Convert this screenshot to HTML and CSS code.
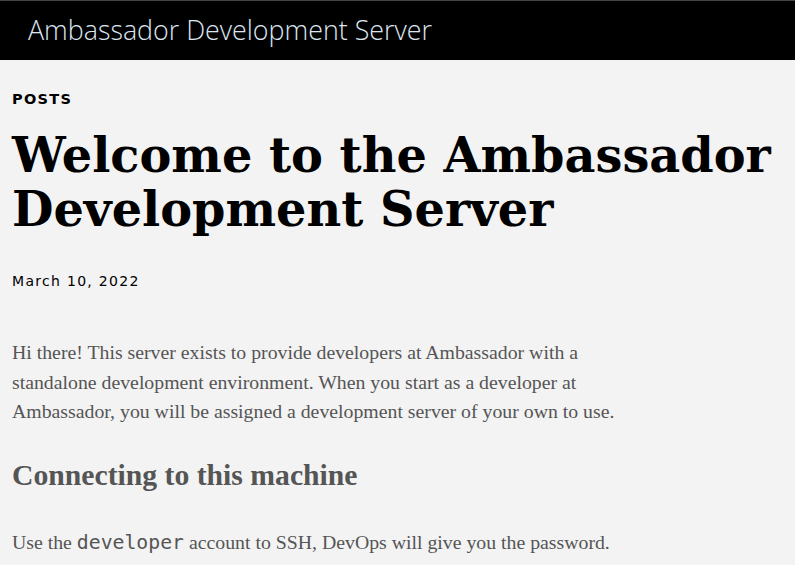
FILE: index.html
```html
<!DOCTYPE html>
<html>
<head>
<meta charset="utf-8">
<link rel="stylesheet" href="styles.css">
</head>
<body>
<header class="topbar">
  <div class="brand">Ambassador Development Server</div>
</header>
<main class="content">
  <div class="section-label">POSTS</div>
  <h1 class="post-title">Welcome to the Ambassador Development Server</h1>
  <div class="post-date">March 10, 2022</div>
  <div class="post-body">
    <p>Hi there! This server exists to provide developers at Ambassador with a standalone development environment. When you start as a developer at Ambassador, you will be assigned a development server of your own to use.</p>
    <h2>Connecting to this machine</h2>
    <p>Use the <code>developer</code> account to SSH, DevOps will give you the password.</p>
  </div>
</main>
</body>
</html>
```
FILE: styles.css
```css
html, body {
  margin: 0;
  padding: 0;
  background: #f3f3f3;
}
body {
  border-top: 1px solid #444;
}
.topbar {
  background: #000;
  height: 59px;
  display: flex;
  align-items: center;
  padding-left: 28px;
}
.brand {
  font-family: "Open Sans", sans-serif;
  font-weight: 300;
  font-size: 26.8px;
  color: #dde6f0;
  line-height: 1;
  margin-top: -1px;
}
.content {
  padding: 0 12px;
}
.section-label {
  font-family: "DejaVu Sans", sans-serif;
  font-weight: bold;
  font-size: 14.5px;
  letter-spacing: 1.3px;
  color: #000;
  margin-top: 30px;
  line-height: 18px;
}
.post-title {
  font-family: "DejaVu Serif", serif;
  font-weight: bold;
  font-size: 47.8px;
  line-height: 54px;
  margin: 20px 0 0 0;
  color: #000;
}
.post-date {
  font-family: "DejaVu Sans", sans-serif;
  font-size: 14px;
  letter-spacing: 1.3px;
  color: #000;
  margin-top: 36px;
  line-height: 18px;
}
.post-body {
  max-width: 640px;
  font-family: "Liberation Serif", serif;
  font-size: 19.8px;
  line-height: 29.5px;
  color: #555;
  margin-top: 48px;
}
.post-body p {
  margin: 0;
}
.post-body h2 {
  font-family: "Liberation Serif", serif;
  font-size: 29.7px;
  font-weight: bold;
  line-height: 36px;
  margin: 30px 0 35px 0;
  color: #555;
}
.post-body code {
  font-family: "DejaVu Sans Mono", monospace;
  font-size: 19.8px;
}
```
